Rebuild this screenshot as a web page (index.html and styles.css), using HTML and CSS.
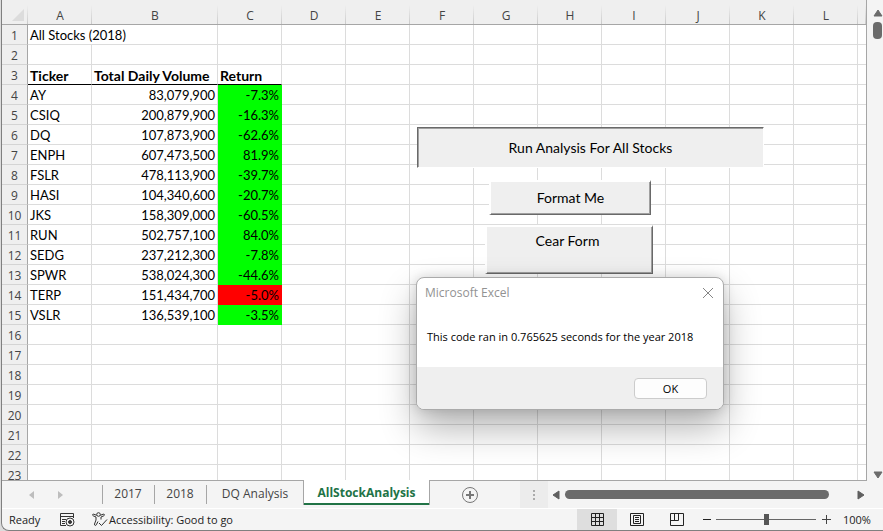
FILE: index.html
```html
<!DOCTYPE html>
<html lang="en">
<head>
<meta charset="utf-8">
<title>AllStockAnalysis</title>
<link rel="stylesheet" href="styles.css">
</head>
<body>
<div class="window">
  <div class="workspace">
    <main class="sheet">
      <table class="cells">
        <colgroup><col class="col-num"><col class="col-std"><col class="col-wide"><col class="col-std"><col class="col-std"><col class="col-std"><col class="col-std"><col class="col-std"><col class="col-std"><col class="col-std"><col class="col-std"><col class="col-std"><col class="col-std"><col></colgroup>
        <thead>
          <tr><th class="corner"><svg width="12" height="12" viewBox="0 0 12 12" aria-hidden="true"><path d="M12 0V12H0Z" fill="#dcdcdc"/></svg></th><th>A</th><th>B</th><th>C</th><th>D</th><th>E</th><th>F</th><th>G</th><th>H</th><th>I</th><th>J</th><th>K</th><th>L</th><th></th></tr>
        </thead>
        <tbody>
          <tr><th>1</th><td colspan="2">All Stocks (2018)</td><td></td><td class="rest" colspan="10"></td></tr>
          <tr><th>2</th><td></td><td></td><td></td><td class="rest" colspan="10"></td></tr>
          <tr class="titles"><th>3</th><td>Ticker</td><td>Total Daily Volume</td><td>Return</td><td class="rest" colspan="10"></td></tr>
          <tr><th>4</th><td>AY</td><td class="num">83,079,900</td><td class="num up">-7.3%</td><td class="rest" colspan="10"></td></tr>
          <tr><th>5</th><td>CSIQ</td><td class="num">200,879,900</td><td class="num up">-16.3%</td><td class="rest" colspan="10"></td></tr>
          <tr><th>6</th><td>DQ</td><td class="num">107,873,900</td><td class="num up">-62.6%</td><td class="rest" colspan="10"></td></tr>
          <tr><th>7</th><td>ENPH</td><td class="num">607,473,500</td><td class="num up">81.9%</td><td class="rest" colspan="10"></td></tr>
          <tr><th>8</th><td>FSLR</td><td class="num">478,113,900</td><td class="num up">-39.7%</td><td class="rest" colspan="10"></td></tr>
          <tr><th>9</th><td>HASI</td><td class="num">104,340,600</td><td class="num up">-20.7%</td><td class="rest" colspan="10"></td></tr>
          <tr><th>10</th><td>JKS</td><td class="num">158,309,000</td><td class="num up">-60.5%</td><td class="rest" colspan="10"></td></tr>
          <tr><th>11</th><td>RUN</td><td class="num">502,757,100</td><td class="num up">84.0%</td><td class="rest" colspan="10"></td></tr>
          <tr><th>12</th><td>SEDG</td><td class="num">237,212,300</td><td class="num up">-7.8%</td><td class="rest" colspan="10"></td></tr>
          <tr><th>13</th><td>SPWR</td><td class="num">538,024,300</td><td class="num up">-44.6%</td><td class="rest" colspan="10"></td></tr>
          <tr><th>14</th><td>TERP</td><td class="num">151,434,700</td><td class="num down">-5.0%</td><td class="rest" colspan="10"></td></tr>
          <tr><th>15</th><td>VSLR</td><td class="num">136,539,100</td><td class="num up">-3.5%</td><td class="rest" colspan="10"></td></tr>
          <tr><th>16</th><td></td><td></td><td></td><td class="rest" colspan="10"></td></tr>
          <tr><th>17</th><td></td><td></td><td></td><td class="rest" colspan="10"></td></tr>
          <tr><th>18</th><td></td><td></td><td></td><td class="rest" colspan="10"></td></tr>
          <tr><th>19</th><td></td><td></td><td></td><td class="rest" colspan="10"></td></tr>
          <tr><th>20</th><td></td><td></td><td></td><td class="rest" colspan="10"></td></tr>
          <tr><th>21</th><td></td><td></td><td></td><td class="rest" colspan="10"></td></tr>
          <tr><th>22</th><td></td><td></td><td></td><td class="rest" colspan="10"></td></tr>
          <tr><th>23</th><td></td><td></td><td></td><td class="rest" colspan="10"></td></tr>
        </tbody>
      </table>
      <button class="macro macro-run" type="button">Run Analysis For All Stocks</button>
      <button class="macro macro-format" type="button">Format Me</button>
      <button class="macro macro-clear" type="button">Cear Form</button>
      <section class="dialog" role="dialog" aria-labelledby="dialog-title">
        <header class="dialog-head">
          <h2 id="dialog-title">Microsoft Excel</h2>
          <button class="close" type="button" aria-label="Close"><svg width="12" height="12" viewBox="0 0 12 12"><path d="M1 1L11 11M11 1L1 11" stroke="#858585" fill="none"/></svg></button>
        </header>
        <p class="dialog-text">This code ran in 0.765625 seconds for the year 2018</p>
        <footer class="dialog-foot"><button class="ok" type="button">OK</button></footer>
      </section>
    </main>
    <div class="vscroll">
      <svg width="10" height="8" viewBox="0 0 10 8" aria-hidden="true"><path d="M5 1L9 7H1Z" fill="#6b6b6b" stroke="#6b6b6b" stroke-linejoin="round"/></svg>
      <div class="vthumb"></div>
      <svg class="vdown" width="10" height="8" viewBox="0 0 10 8" aria-hidden="true"><path d="M1 1H9L5 7Z" fill="#6b6b6b" stroke="#6b6b6b" stroke-linejoin="round"/></svg>
    </div>
  </div>
  <nav class="tabbar" aria-label="Sheets">
    <div class="arrows">
      <svg width="5" height="8" viewBox="0 0 5 8" aria-hidden="true"><path d="M5 0V8L0 4Z" fill="#bdbdbd"/></svg>
      <svg width="5" height="8" viewBox="0 0 5 8" aria-hidden="true"><path d="M0 0V8L5 4Z" fill="#bdbdbd"/></svg>
    </div>
    <a class="tab" href="#s2017">2017</a>
    <a class="tab" href="#s2018">2018</a>
    <a class="tab tab-wide" href="#dq">DQ Analysis</a>
    <a class="tab active" href="#all">AllStockAnalysis</a>
    <button class="add" type="button" aria-label="New sheet"><svg width="18" height="18" viewBox="0 0 18 18"><circle cx="9" cy="9" r="7.5" fill="none" stroke="#777"/><path d="M9 5V13M5 9H13" stroke="#777" stroke-width="2"/></svg></button>
    <div class="grip"><svg width="2" height="10" viewBox="0 0 2 10" aria-hidden="true"><path d="M0 0H2V2H0ZM0 4H2V6H0ZM0 8H2V10H0Z" fill="#ababab"/></svg></div>
    <div class="hscroll">
      <svg width="8" height="10" viewBox="0 0 8 10" aria-hidden="true"><path d="M7 1V9L1 5Z" fill="#5f5f5f" stroke="#5f5f5f" stroke-linejoin="round"/></svg>
      <div class="hthumb"></div>
      <svg width="8" height="10" viewBox="0 0 8 10" aria-hidden="true"><path d="M1 1V9L7 5Z" fill="#5f5f5f" stroke="#5f5f5f" stroke-linejoin="round"/></svg>
    </div>
  </nav>
  <footer class="status">
    <span class="ready">Ready</span>
    <svg class="rec" width="15" height="14" viewBox="0 0 15 14" fill="none" stroke="#333" aria-hidden="true"><path d="M6 12.5H.5V.5H13.5V5M.5 3.500H13.500M2 6.500H6M2 8.500H5M2 10.500H5"/><circle cx="10" cy="9" r="4"/><circle cx="10" cy="9" r="1.500" fill="#333"/></svg>
    <svg width="16" height="15" viewBox="0 0 16 15" fill="none" stroke="#333" aria-hidden="true"><circle cx="6.500" cy="2.500" r="1.800"/><path d="M4.700 3.300L1.800 2.200C.4 1.800 .1 3.300 1.200 3.800L4 5V8L2.500 12C2.200 13.500 3.800 14 4.300 12.800L6 9.500M8.300 3.300L11.200 2.200C12.600 1.800 12.900 3.300 11.800 3.800L9 5V7.500M7 11L9.500 13.500L15 7.500"/></svg>
    <span>Accessibility: Good to go</span>
    <div class="views">
      <button class="view on" type="button" aria-label="Normal"><svg width="13" height="13" viewBox="0 0 13 13" fill="none" stroke="#222"><path d="M.5 .5H12.500V12.500H.5ZM4.500 .5V12.500M8.500 .5V12.500M.5 4.500H12.500M.5 8.500H12.500"/></svg></button>
      <button class="view" type="button" aria-label="Page layout"><svg width="14" height="13" viewBox="0 0 14 13" fill="none" stroke="#222"><path d="M.5 .5H13.500V12.500H.5ZM3.500 2.500H10.500V10.500H3.500ZM5 4.500H9M5 6.500H9M5 8.500H9"/></svg></button>
      <button class="view" type="button" aria-label="Page break preview"><svg width="14" height="13" viewBox="0 0 14 13" fill="none" stroke="#222"><path d="M.5 .5H13.500V12.500H.5ZM4.500 .5V7.500M8.500 .5V7.500M.5 7.500H8.500"/></svg></button>
    </div>
    <button class="step" type="button" aria-label="Zoom out"><svg width="8" height="9" viewBox="0 0 8 9"><path d="M0 4.500H8" stroke="#222"/></svg></button>
    <input class="zoom" type="range" min="10" max="190" value="100" aria-label="Zoom">
    <button class="step" type="button" aria-label="Zoom in"><svg width="9" height="9" viewBox="0 0 9 9"><path d="M0 4.500H9M4.500 0V9" stroke="#444"/></svg></button>
    <span class="percent">100%</span>
  </footer>
</div>
</body>
</html>
```
FILE: styles.css
```css
* { box-sizing: border-box; }
body {
  margin: 0;
  padding-left: 1px;
  height: 100vh;
  overflow: hidden;
  background: #dcdcdc;
  font-family: "Open Sans", "Noto Sans", sans-serif;
  font-size: 12px;
  color: #222;
}
button { margin: 0; padding: 0; border: 0; background: none; font: inherit; color: inherit; }
svg { display: block; flex: none; }
.window {
  display: flex;
  flex-direction: column;
  height: 100%;
  border-left: 1px solid #808080;
  border-bottom: 1px solid #808080;
  border-bottom-left-radius: 8px;
  background: #f4f4f4;
  overflow: hidden;
}
.workspace { display: flex; flex: 1; min-height: 0; }

/* Worksheet */
.sheet {
  position: relative;
  flex: 1;
  min-width: 0;
  overflow: hidden;
  background: #fff;
  border-right: 1px solid #a6a6a6;
  border-bottom: 1px solid #a6a6a6;
}
.cells {
  width: 100%;
  table-layout: fixed;
  border-collapse: separate;
  border-spacing: 0;
  font-family: Lato, sans-serif;
  font-size: 13px;
  line-height: 17px;
  color: #000;
}
.col-num { width: 26px; }
.col-std { width: 64px; }
.col-wide { width: 126px; }
.cells th {
  padding: 2px 0 0;
  font-family: "Open Sans", sans-serif;
  font-size: 12px;
  font-weight: 400;
  color: #444;
  background: #efefef;
}
.cells thead th {
  height: 25px;
  padding-top: 5px;
  background:
    linear-gradient(#a6a6a6, #a6a6a6) bottom / 100% 1px no-repeat,
    linear-gradient(#efefef 20%, #c8c8c8) right / 1px 100% no-repeat,
    #efefef;
}
.cells .corner { padding: 4px 0 0 10px; }
tbody th {
  height: 20px;
  border-right: 1px solid #a6a6a6;
  border-bottom: 1px solid #d4d4d4;
}
td {
  height: 20px;
  padding: 2px 2px 0;
  border-right: 1px solid #dcdcdc;
  border-bottom: 1px solid #dcdcdc;
  white-space: nowrap;
}
.titles td { font-size: 14px; font-weight: 700; border-bottom-color: #000; }
.cells .rest {
  border-right: 0;
  border-bottom-color: #dcdcdc;
  background: repeating-linear-gradient(to right, transparent 0 63px, #dcdcdc 63px 64px);
}
.num { text-align: right; }
.up { background: #0f0; border-color: #0f0; }
.down { background: #f00; border-color: #f00; }

/* Macro buttons drawn on the sheet */
.macro {
  position: absolute;
  background: #efefef;
  border: 2px solid;
  border-color: #fff #696969 #696969 #fff;
  box-shadow: inset -1px -1px #a0a0a0;
  font-family: Lato, sans-serif;
  font-size: 14px;
  line-height: 18px;
  color: #000;
}
.macro-run {
  left: 415px;
  top: 127px;
  width: 347px;
  height: 41px;
  border-color: #696969 #fff #fff #696969;
  border-width: 1px;
  box-shadow: inset 1px 1px #a0a0a0;
}
.macro-format { left: 487px; top: 180px; width: 162px; height: 35px; border-width: 2px 1px 1px 2px; }
.macro-clear { left: 483px; top: 225px; width: 168px; height: 49px; padding: 0 4px 18px 0; border-width: 2px 1px 1px 2px; }

/* Message box */
.dialog {
  position: absolute;
  left: 414px;
  top: 277px;
  width: 308px;
  border: 1px solid #aaa;
  border-radius: 8px;
  background: #fff;
  box-shadow: 0 18px 36px rgba(0, 0, 0, .3), 0 0 12px rgba(0, 0, 0, .14);
  font-size: 11px;
  color: #000;
}
.dialog-head { display: flex; align-items: center; justify-content: space-between; height: 29px; padding: 0 9px 0 8px; }
.dialog-head h2 { margin: 0; font-size: 12px; font-weight: 400; color: #929292; }
.dialog-text { margin: 0; padding: 22px 10px; line-height: 16px; }
.dialog-foot {
  display: flex;
  justify-content: flex-end;
  align-items: center;
  height: 42px;
  padding-right: 16px;
  border-radius: 0 0 7px 7px;
  background: #efefef;
}
.ok { width: 73px; height: 21px; border: 1px solid #ccc; border-radius: 4px; background: #fdfdfd; }

/* Scroll bars */
.vscroll { display: flex; flex-direction: column; align-items: center; width: 16px; padding: 9px 0 2px 5px; }
.vthumb { width: 9px; height: 17px; margin-top: 5px; border-radius: 4px; background: #6b6b6b; }
.vdown { margin-top: auto; }
.hscroll { display: flex; align-items: center; gap: 5px; width: 335px; padding: 0 18px 0 4px; }
.hthumb { flex: 1; height: 9px; margin-right: 23px; border-radius: 5px; background: #6b6b6b; }

/* Sheet tabs */
.tabbar { display: flex; height: 28px; border-bottom: 1px solid #fff; font-size: 12px; }
.arrows { display: flex; align-items: center; gap: 24px; width: 100px; padding-left: 27px; }
.tab {
  display: flex;
  align-items: center;
  justify-content: center;
  width: 52px;
  height: 24px;
  color: #444;
  text-decoration: none;
  background: linear-gradient(#a6a6a6, #a6a6a6) left 4px / 1px 19px no-repeat;
}
.tab-wide { width: 98px; }
.active {
  position: relative;
  width: 125px;
  border-bottom: 2px solid #217346;
  box-shadow: 0 -1px #fff, 1px 0 #a6a6a6, -1px 0 #a6a6a6;
  background: #fff;
  color: #217346;
  font-weight: 700;
}
.add { width: 82px; display: flex; justify-content: center; align-items: center; }
.grip { display: flex; align-items: center; justify-content: center; width: 28px; margin-left: auto; background: #ececec; }

/* Status bar */
.status { display: flex; align-items: center; height: 21px; font-size: 11px; }
.ready { width: 58px; padding-left: 7px; }
.rec { margin-right: 17px; }
.status svg + span { margin-left: 1px; }
.views { display: flex; align-self: stretch; margin-left: auto; }
.view { display: flex; align-items: center; justify-content: center; width: 40px; }
.on { background: #dedede; }
.step { margin-left: 6px; }
.zoom { appearance: none; width: 100px; height: 12px; margin: 0 0 0 5px; background: linear-gradient(#666, #666) center / 100% 1px no-repeat; }
.zoom::-webkit-slider-thumb { appearance: none; width: 5px; height: 11px; background: #555; }
.percent { width: 40px; margin-left: 12px; }
```
